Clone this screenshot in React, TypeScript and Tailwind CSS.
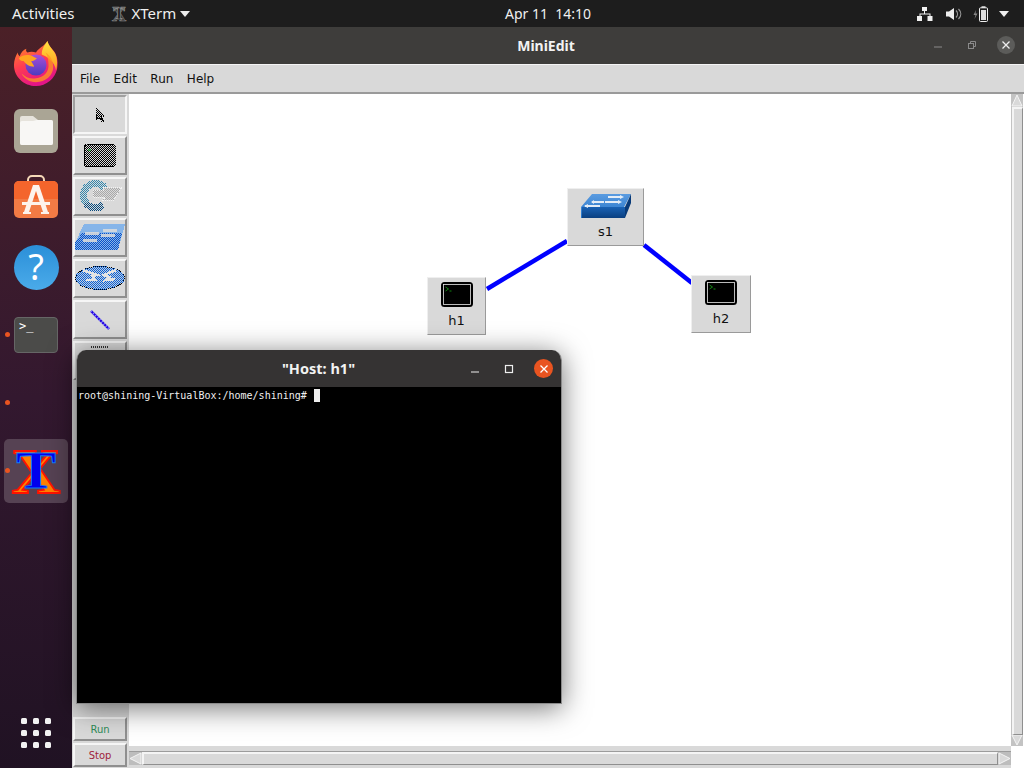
import React from "react";

const sans = "font-['Noto_Sans','Open_Sans',sans-serif]";
const tk = "font-['DejaVu_Sans',sans-serif]";

function Defs() {
  return (
    <svg className="absolute w-0 h-0">
      <defs>
        <pattern id="checkP" width="2" height="2" patternUnits="userSpaceOnUse">
          <rect x="0" y="0" width="1" height="1" fill="#fff" />
          <rect x="1" y="1" width="1" height="1" fill="#fff" />
        </pattern>
        <mask id="check" maskUnits="userSpaceOnUse" x="0" y="0" width="60" height="45">
          <rect width="60" height="45" fill="url(#checkP)" />
        </mask>
        <linearGradient id="ffBody" x1="0" y1="0" x2="0.4" y2="1">
          <stop offset="0" stopColor="#ff9a1f" />
          <stop offset="0.55" stopColor="#ff3d50" />
          <stop offset="1" stopColor="#e31587" />
        </linearGradient>
        <linearGradient id="ffFlame" x1="0" y1="0" x2="0" y2="1">
          <stop offset="0" stopColor="#ffe23f" />
          <stop offset="1" stopColor="#ff9a1f" />
        </linearGradient>
        <linearGradient id="ffCore" x1="0" y1="0" x2="0" y2="1">
          <stop offset="0" stopColor="#a94fd8" />
          <stop offset="1" stopColor="#4a3bc0" />
        </linearGradient>
        <linearGradient id="swTop" x1="0" y1="0" x2="0" y2="1">
          <stop offset="0" stopColor="#5a9be0" />
          <stop offset="1" stopColor="#2474c8" />
        </linearGradient>
        <linearGradient id="swFront" x1="0" y1="0" x2="0" y2="1">
          <stop offset="0" stopColor="#1a62b4" />
          <stop offset="1" stopColor="#0a3f80" />
        </linearGradient>
      </defs>
    </svg>
  );
}

function Firefox() {
  return (
    <svg width="46" height="47" viewBox="0 0 48 49">
      <path d="M36 1c1 5 4 7 7 11 4 6 4 13 3 18-2 10-11 18-22 18C11 48 1 38 1 26c0-5 2-10 4-13 0 2 1 3 2 4 1-4 4-7 7-8-1 2 0 3 1 4 3-1 6-1 9 0 3-5 8-6 12-12z" fill="url(#ffBody)" />
      <path d="M36 1c1 5 5 8 8 13 3 6 2 13 1 18-1-5-3-9-7-12-2-2-5-4-8-5 0-6 3-10 6-14z" fill="url(#ffFlame)" />
      <circle cx="24" cy="26" r="11" fill="url(#ffCore)" />
      <path d="M6 19c3-3 8-4 12-3 3 1 5 3 7 3-2 2-4 3-6 3 1 3 3 4 3 6-5 0-9-3-11-6-2 0-4-1-5-3z" fill="#ffa520" />
      <path d="M34 13c5 3 8 9 8 15 0 9-8 16-18 16-7 0-13-4-15-9 4 4 9 6 15 5 8-1 14-7 13-15 0-4-1-9-3-12z" fill="#ff9a1f" opacity="0.75" />
    </svg>
  );
}

function Files() {
  return (
    <svg width="46" height="46" viewBox="0 0 46 46">
      <rect x="1" y="1" width="44" height="44" rx="6" fill="#aaa595" />
      <path d="M7 10a2 2 0 0 1 2-2h11l5 4h13a2 2 0 0 1 2 2v21a2 2 0 0 1-2 2H9a2 2 0 0 1-2-2z" fill="#e6e3dc" />
      <path d="M7 15a2 2 0 0 1 2-2h11l4-1h14a2 2 0 0 1 2 2v21a2 2 0 0 1-2 2H9a2 2 0 0 1-2-2z" fill="#f8f7f5" />
    </svg>
  );
}

function Software() {
  return (
    <svg width="46" height="44" viewBox="0 0 46 44" className="mb-[4px]">
      <path d="M15 8V5a4 4 0 0 1 4-4h8a4 4 0 0 1 4 4v3" fill="none" stroke="#f5d9b8" strokeWidth="2" />
      <rect x="1" y="6" width="44" height="37" rx="5" fill="#f27b45" />
      <path d="M1 24V11a5 5 0 0 1 5-5h34a5 5 0 0 1 5 5v13z" fill="#f4652c" />
      <path d="M20 10h6l9 27h-5L23 16l-7 21h-5z" fill="#fdf3ec" />
      <path d="M9 27h28v3H9zM10 37h8v2h-8zM28 37h8v2h-8z" fill="#fdf3ec" />
    </svg>
  );
}

function Help() {
  return (
    <div className={`relative w-[45px] h-[45px] rounded-full bg-gradient-to-b from-[#2a8fd8] to-[#4aabea] flex items-center justify-center text-white text-[36px] font-normal leading-none ${sans}`}>?</div>
  );
}

function TerminalIcon() {
  return (
    <div className="w-[44px] h-[36px] rounded-[4px] bg-[#4b4b49] border border-[#666] relative">
      <span className="absolute left-[4px] top-[1px] text-white text-[12px] leading-[14px] font-['DejaVu_Sans_Mono',monospace]">{">_"}</span>
    </div>
  );
}

function XLogo({ gray }: { gray?: boolean }) {
  if (gray) {
    return (
      <svg width="16" height="16" viewBox="0 0 46 46" className="overflow-visible">
        <text x="23" y="42" textAnchor="middle" fontFamily="Liberation Serif" fontWeight="700" fontSize="58" fill="#3a3a3a" stroke="#888" strokeWidth="1.5">X</text>
        <text x="23" y="38" textAnchor="middle" fontFamily="Liberation Serif" fontWeight="700" fontSize="50" fill="#1d1d1d" stroke="#aaa" strokeWidth="1.5">T</text>
      </svg>
    );
  }
  return (
    <svg width="46" height="46" viewBox="0 0 46 46" className="overflow-visible">
      <g transform="translate(23 45) scale(1.06 1)">
        <text x="0" y="0" textAnchor="middle" fontFamily="Liberation Serif" fontWeight="700" fontSize="64" fill="#ff8000" stroke="#ff1200" strokeWidth="1.8">X</text>
      </g>
      <g transform="translate(23 40) scale(1 0.88)">
        <text x="0" y="0" textAnchor="middle" fontFamily="Liberation Serif" fontWeight="700" fontSize="60" fill="#0000ee" stroke="#1080ff" strokeWidth="1">T</text>
      </g>
    </svg>
  );
}

function Dock() {
  const slot = "relative h-[68px] flex items-center justify-center";
  const dot = "absolute left-[5px] top-[31px] w-[5px] h-[5px] rounded-full bg-[#e95420]";
  return (
    <div className="w-[72px] shrink-0 bg-gradient-to-b from-[#4b2027] via-[#33182f] to-[#201223] flex flex-col pt-[2px]">
      <div className={slot}><Firefox /></div>
      <div className={slot}><Files /></div>
      <div className={slot}><Software /></div>
      <div className={slot}><Help /></div>
      <div className={slot}><TerminalIcon /><span className={dot} /></div>
      <div className={slot}><span className={dot} /></div>
      <div className={slot}>
        <div className="w-[64px] h-[64px] rounded-[5px] bg-[#564253] flex items-center justify-center"><XLogo /></div>
        <span className={dot} />
      </div>
      <div className="flex-1 flex items-end justify-center pb-[20px]">
        <div className="grid grid-cols-3 gap-x-[6px] gap-y-[6px]">
          {Array.from({ length: 9 }).map((_, i) => (
            <span key={i} className="w-[6px] h-[6px] rounded-[1.5px] bg-[#f2f2f2]" />
          ))}
        </div>
      </div>
    </div>
  );
}

function TopBar() {
  return (
    <div className={`h-[27px] shrink-0 bg-[#1d1d1d] text-[#f0f0f0] text-[15px] flex items-center relative ${sans}`}>
      <span className="ml-[12px]">Activities</span>
      <span className="ml-[36px] flex items-center"><XLogo gray /></span>
      <span className="ml-[5px]">XTerm</span>
      <svg className="ml-[4px]" width="10" height="6" viewBox="0 0 10 6"><path d="M0 0h10L5 6z" fill="#eee" /></svg>
      <span className="absolute left-[505px] top-[4px] leading-[19px] text-[14px]">Apr 11&nbsp; 14:10</span>
      <div className="ml-auto mr-[15px] flex items-center">
        <svg width="16" height="14" viewBox="0 0 16 14" fill="#f2f2f2">
          <rect x="5" y="0" width="5" height="4" />
          <rect x="0" y="9" width="5" height="5" />
          <rect x="10.5" y="9" width="5" height="5" />
          <path d="M7 4h1v2.5h5.5V9h-1V7.5h-9V9h-1V6.5H7z" />
        </svg>
        <svg className="ml-[13px]" width="16" height="14" viewBox="0 0 16 14" fill="#eee">
          <path d="M0 4.5h3L8 1v12L3 9.5H0z" />
          <path d="M10 3.5c2 2 2 5 0 7M12.5 2c3 3 3 7 0 10" fill="none" stroke="#999" strokeWidth="1.2" />
        </svg>
        <svg className="ml-[11px]" width="15" height="16" viewBox="0 0 15 16" fill="none">
          <path d="M3 4L0.5 9H2.5L1.5 13 4.5 7.5H2.5z" fill="#888" />
          <rect x="6.5" y="1.8" width="8" height="13.7" rx="1" stroke="#f0f0f0" />
          <rect x="8.5" y="0.3" width="4" height="1.5" fill="#f0f0f0" />
          <rect x="8" y="4" width="5" height="10" fill="#ddd" />
        </svg>
        <svg className="ml-[11px]" width="10" height="6" viewBox="0 0 10 6"><path d="M0 0h10L5 6z" fill="#eee" /></svg>
      </div>
    </div>
  );
}

function ToolBtn({ children, pressed, clip }: { children?: React.ReactNode; pressed?: boolean; clip?: boolean }) {
  const border = pressed
    ? "border-t-[#a0a0a0] border-l-[#a0a0a0] border-r-[#f6f6f6] border-b-[#f6f6f6]"
    : "border-t-[#f6f6f6] border-l-[#f6f6f6] border-r-[#8f8f8f] border-b-[#8f8f8f]";
  return (
    <div className={`w-[54px] h-[39px] mb-[2px] border-2 bg-[#d9d9d9] flex items-center justify-center shrink-0 ${border} ${clip ? "overflow-hidden" : ""}`}>
      {children}
    </div>
  );
}

function IconSvg({ children }: { children: React.ReactNode }) {
  return <svg width="50" height="35" viewBox="0 0 50 35" shapeRendering="crispEdges">{children}</svg>;
}

function Toolbar() {
  return (
    <div className="w-[57px] shrink-0 bg-[#d9d9d9] flex flex-col pl-[1px] pt-[1px] pb-[1px]">
      <ToolBtn pressed>
        <svg width="10" height="16" viewBox="0 0 10 16" shapeRendering="crispEdges">
          <g mask="url(#check)">
            <path d="M1 1l8 8-3 .5 2.5 5-1.5 1-2.5-5L1 12.5z" fill="#000" />
          </g>
          <path d="M1 1l8 8-3 .5 2.5 5-1.5 1-2.5-5L1 12.5z" fill="none" stroke="#000" strokeDasharray="1.5 .7" />
        </svg>
      </ToolBtn>
      <ToolBtn>
        <IconSvg>
          <g mask="url(#check)">
            <rect x="9" y="6" width="32" height="23" rx="3" fill="#000" />
          </g>
          <rect x="9.5" y="6.5" width="31" height="22" rx="3" fill="none" stroke="#000" strokeDasharray="1 1" />
          <rect x="13" y="11" width="3" height="2" fill="#1fbf3f" opacity="0.7" />
        </IconSvg>
      </ToolBtn>
      <ToolBtn>
        <IconSvg>
          <g mask="url(#check)">
            <path d="M11 24A11.5 11.5 0 1 1 30 9" fill="none" stroke="#2f86ad" strokeWidth="7" />
            <path d="M11 24A11.5 11.5 0 0 0 28 26" fill="none" stroke="#07497c" strokeWidth="7" />
          </g>
          <path d="M18 11h11l-2-3h20l-8 13H28l2-3H18z" fill="#a8a8a8" mask="url(#check)" />
          <path d="M18 11h11l-2-3h20l-8 13H28l2-3H18z" fill="none" stroke="#f2f2f2" strokeDasharray="1 1" />
        </IconSvg>
      </ToolBtn>
      <ToolBtn>
        <IconSvg>
          <path d="M9 4H50L43 30H0V23z" fill="#6aa8ee" opacity="0.75" />
          <g mask="url(#check)">
            <path d="M7 13H47L43 30H0V23z" fill="#0a50c8" />
          </g>
          <path d="M10 13h14M8 20h14M28 10h14M26 15h14" stroke="#dddddd" strokeWidth="3" opacity="0.85" />
        </IconSvg>
      </ToolBtn>
      <ToolBtn>
        <IconSvg>
          <ellipse cx="25" cy="17" rx="25" ry="12" fill="#6aa6ea" opacity="0.2" />
          <g mask="url(#check)">
            <ellipse cx="25" cy="17" rx="25" ry="12" fill="#0a60d8" />
          </g>
          <ellipse cx="25" cy="17" rx="24.5" ry="11.5" fill="none" stroke="#000" strokeDasharray="1 1" />
          <path d="M8 9l14 5-5 1 3 4-9 0M41 9L29 14l5 2-3 3 9-1" fill="none" stroke="#e4e4e4" strokeWidth="2.5" />
        </IconSvg>
      </ToolBtn>
      <ToolBtn>
        <svg width="22" height="22" viewBox="0 0 22 22">
          <path d="M2 2L20 20" stroke="#2200e0" strokeWidth="2.4" />
          <path d="M2 2L20 20" stroke="#8f8fff" strokeWidth="2.4" strokeDasharray="1 2" />
        </svg>
      </ToolBtn>
      <ToolBtn clip>
        <svg width="30" height="35" viewBox="0 0 30 35" className="self-start"><path d="M6 4h18" stroke="#333" strokeWidth="2" strokeDasharray="1 1" /></svg>
      </ToolBtn>
      <div className="flex-1" />
      <RunBtn label="Run" color="text-[#2e8b57]" />
      <div className="h-[2px] shrink-0" />
      <RunBtn label="Stop" color="text-[#a0243c]" />
    </div>
  );
}

function RunBtn({ label, color }: { label: string; color: string }) {
  return (
    <div className={`w-[54px] h-[24px] shrink-0 border-2 border-t-[#f6f6f6] border-l-[#f6f6f6] border-r-[#8f8f8f] border-b-[#8f8f8f] bg-[#d9d9d9] flex items-center justify-center text-[10px] ${tk} ${color}`}>
      {label}
    </div>
  );
}

function HostIcon() {
  return (
    <svg width="32" height="26" viewBox="0 0 32 26">
      <rect x="1.5" y="1.5" width="29" height="22" rx="2" fill="#000" stroke="#000" strokeWidth="3" />
      <rect x="2.5" y="2.5" width="27" height="20" fill="#000" stroke="#e8e8e8" strokeWidth="0.8" />
      <path d="M4.5 5l3 2-3 2M8.5 9h2" stroke="#19c219" strokeWidth="0.7" fill="none" />
    </svg>
  );
}

function SwitchIcon() {
  return (
    <svg width="50" height="26" viewBox="0 0 50 26">
      <path d="M11 1H50L43 14V25H0V14z" fill="url(#swTop)" />
      <path d="M1 14H44V25H1z" fill="url(#swFront)" />
      <path d="M44 14L50 1V10L44 25z" fill="#083a78" />
      <path d="M11 9h12M4 13h15M27 4h13M24 9h14" stroke="#e4edf7" strokeWidth="1.8" />
      <path d="M13 7l-3 2 3 2zM7 11l-4 2 4 2zM39 2l4 2-4 2zM37 7l4 2-4 2z" fill="#e4edf7" />
    </svg>
  );
}

function NetNode({ pos, label, children }: { pos: string; label: string; children: React.ReactNode }) {
  return (
    <div className={`absolute ${pos} border-[1.5px] border-t-[#efefef] border-l-[#efefef] border-r-[#9a9a9a] border-b-[#9a9a9a] bg-[#d9d9d9] flex flex-col items-center pt-[3px] ${tk}`}>
      <div className="h-[28px] flex items-center">{children}</div>
      <div className="text-[13px] leading-[16px] text-[#111] mt-[4px]">{label}</div>
    </div>
  );
}

function Canvas() {
  return (
    <div className="relative flex-1 bg-white overflow-hidden">
      <svg className="absolute left-0 top-0" width="882" height="656" viewBox="0 0 882 656">
        <line x1="358" y1="195" x2="438" y2="147" stroke="#0000ff" strokeWidth="4.5" />
        <line x1="515" y1="151" x2="563" y2="189" stroke="#0000ff" strokeWidth="4.5" />
      </svg>
      <NetNode pos="left-[438px] top-[94px] w-[77px] h-[58px]" label="s1"><SwitchIcon /></NetNode>
      <NetNode pos="left-[298px] top-[183px] w-[59px] h-[58px]" label="h1"><HostIcon /></NetNode>
      <NetNode pos="left-[562px] top-[181px] w-[60px] h-[58px]" label="h2"><HostIcon /></NetNode>
    </div>
  );
}

function VScroll() {
  return (
    <div className="w-[13px] shrink-0 bg-[#c3c3c3] flex flex-col border-r border-white">
      <svg width="12" height="13" viewBox="0 0 12 13" className="shrink-0">
        <path d="M6 1L11 12H1z" fill="#d9d9d9" stroke="#f4f4f4" />
      </svg>
      <div className="flex-1 bg-[#d9d9d9] border-l-2 border-t-2 border-l-[#f4f4f4] border-t-[#f4f4f4] border-r border-b border-r-[#8f8f8f] border-b-[#8f8f8f] ml-[1px]" />
      <svg width="12" height="11" viewBox="0 0 12 11" className="shrink-0">
        <path d="M6 10L11 0H1z" fill="#d9d9d9" stroke="#f4f4f4" />
      </svg>
    </div>
  );
}

function HScroll() {
  return (
    <div className="h-[22px] shrink-0 flex">
      <div className="flex-1 flex flex-col bg-[#d9d9d9]">
        <div className="h-[14px] mt-[5px] bg-[#bdbdbd] flex items-center border-t border-[#9c9c9c]">
          <svg width="13" height="13" viewBox="0 0 13 13" className="shrink-0">
            <path d="M1 6.5L12 1V12z" fill="#d9d9d9" stroke="#f4f4f4" />
          </svg>
          <div className="flex-1 h-[13px] bg-[#d9d9d9] border-l-2 border-t-2 border-l-[#f4f4f4] border-t-[#f4f4f4] border-r border-b border-r-[#8f8f8f] border-b-[#8f8f8f]" />
          <svg width="13" height="13" viewBox="0 0 13 13" className="shrink-0">
            <path d="M12 6.5L1 1V12z" fill="#d9d9d9" stroke="#f4f4f4" />
          </svg>
        </div>
      </div>
      <div className="w-[13px] bg-white" />
    </div>
  );
}

function MiniEdit() {
  return (
    <div className="flex-1 flex flex-col min-w-0">
      <div className={`h-[38px] shrink-0 bg-[#3e3d3b] border-b border-[#f4f4f4] relative flex items-center justify-center text-[14px] font-bold text-[#f2f2f2] ${sans}`}>
        <span className="ml-[-4px]">MiniEdit</span>
        <div className="absolute right-[9px] top-[9px] flex items-center">
          <svg width="10" height="10" viewBox="0 0 10 10"><path d="M1 7h8" stroke="#8a8a8a" /></svg>
          <svg className="ml-[24px]" width="10" height="10" viewBox="0 0 10 10" fill="none" stroke="#8a8a8a"><rect x="1.5" y="3.5" width="5" height="5" /><path d="M3.5 3.5v-2h5v5h-2" /></svg>
          <div className="ml-[20px] w-[18px] h-[18px] rounded-full bg-[#5c5c5a] flex items-center justify-center">
            <svg width="10" height="10" viewBox="0 0 10 10"><path d="M1.5 1.5l7 7M8.5 1.5l-7 7" stroke="#eee" strokeWidth="1.3" /></svg>
          </div>
        </div>
      </div>
      <div className={`h-[29px] shrink-0 bg-[#d9d9d9] border-b-2 border-b-[#9a9a9a] flex items-center pl-[8px] gap-[13.5px] text-[12px] text-[#111] ${tk}`}>
        <span>File</span><span>Edit</span><span>Run</span><span>Help</span>
      </div>
      <div className="flex-1 flex min-h-0">
        <Toolbar />
        <div className="flex-1 flex flex-col min-w-0">
          <div className="flex-1 flex min-h-0">
            <Canvas />
            <VScroll />
          </div>
          <HScroll />
        </div>
      </div>
    </div>
  );
}

function Terminal() {
  return (
    <div className="absolute left-[76px] top-[350px] w-[486px] h-[354px] flex flex-col rounded-t-[10px] overflow-hidden shadow-[0_4px_28px_rgba(0,0,0,0.55)] border-x border-b border-[#8a8a8a]">
      <div className={`h-[37px] shrink-0 bg-[#353333] relative flex items-center justify-center text-[14.5px] font-bold text-[#f2f2f2] ${sans}`}>
        <span className="ml-[-1px]">"Host: h1"</span>
        <div className="absolute right-[8px] top-[9px] flex items-center">
          <svg width="10" height="10" viewBox="0 0 10 10"><path d="M1 8h8" stroke="#eee" strokeWidth="1.2" /></svg>
          <svg className="ml-[24px]" width="10" height="10" viewBox="0 0 10 10"><rect x="1.5" y="1.5" width="7" height="7" fill="none" stroke="#eee" strokeWidth="1.2" /></svg>
          <div className="ml-[20px] w-[19px] h-[19px] rounded-full bg-[#e95420] flex items-center justify-center">
            <svg width="10" height="10" viewBox="0 0 10 10"><path d="M1.5 1.5l7 7M8.5 1.5l-7 7" stroke="#fff" strokeWidth="1.3" /></svg>
          </div>
        </div>
      </div>
      <div className="flex-1 bg-black text-[#f0f0f0] text-[10px] leading-[13px] font-['DejaVu_Sans_Mono',monospace] pt-[2px] pl-[1px] flex items-start">
        <span>root@shining-VirtualBox:/home/shining#</span>
        <span className="inline-block w-[6px] h-[13px] ml-[7px] bg-[#eeeeee]" />
      </div>
    </div>
  );
}

export default function App() {
  return (
    <div className="relative w-[1024px] h-[768px] overflow-hidden flex flex-col bg-black">
      <Defs />
      <TopBar />
      <div className="flex-1 flex min-h-0">
        <Dock />
        <MiniEdit />
      </div>
      <Terminal />
    </div>
  );
}
